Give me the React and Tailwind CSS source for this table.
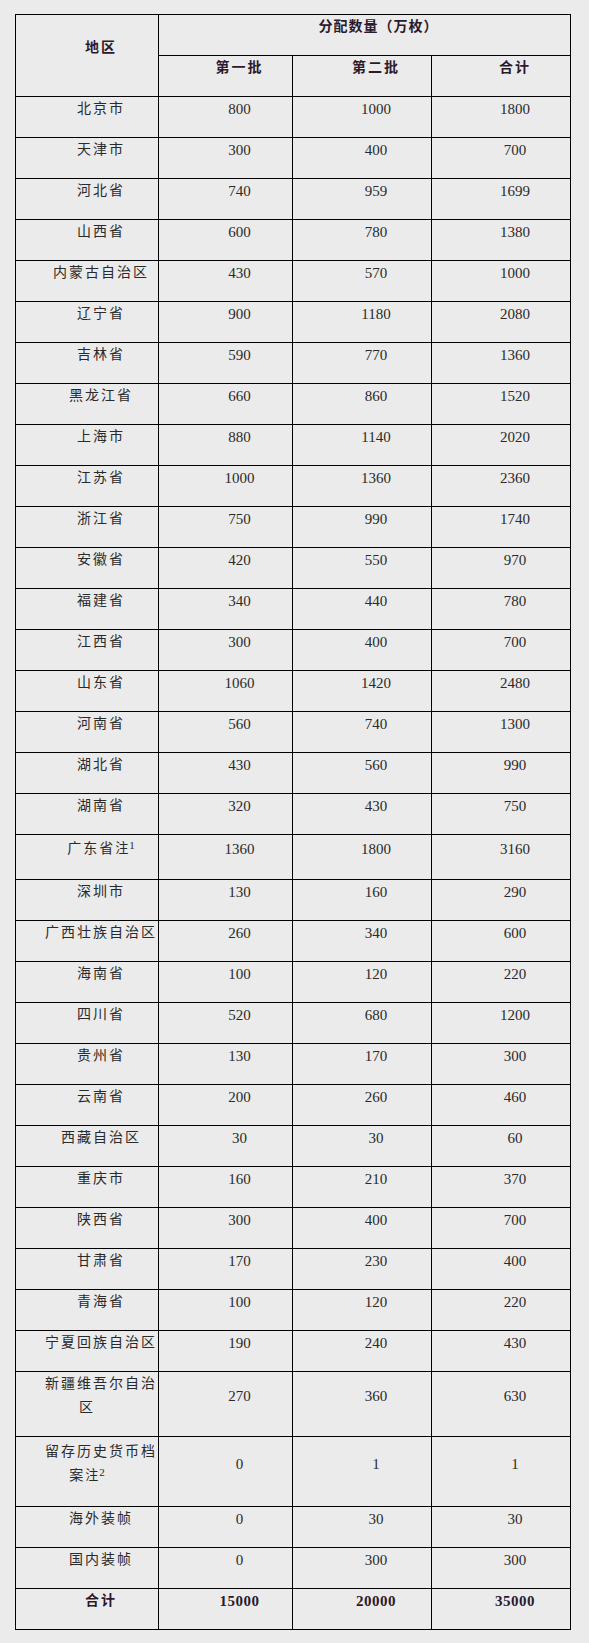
const rows = [
  ['北京市', '800', '1000', '1800'],
  ['天津市', '300', '400', '700'],
  ['河北省', '740', '959', '1699'],
  ['山西省', '600', '780', '1380'],
  ['内蒙古自治区', '430', '570', '1000'],
  ['辽宁省', '900', '1180', '2080'],
  ['吉林省', '590', '770', '1360'],
  ['黑龙江省', '660', '860', '1520'],
  ['上海市', '880', '1140', '2020'],
  ['江苏省', '1000', '1360', '2360'],
  ['浙江省', '750', '990', '1740'],
  ['安徽省', '420', '550', '970'],
  ['福建省', '340', '440', '780'],
  ['江西省', '300', '400', '700'],
  ['山东省', '1060', '1420', '2480'],
  ['河南省', '560', '740', '1300'],
  ['湖北省', '430', '560', '990'],
  ['湖南省', '320', '430', '750'],
  ['广东省', '1360', '1800', '3160', '1'],
  ['深圳市', '130', '160', '290'],
  ['广西壮族自治区', '260', '340', '600'],
  ['海南省', '100', '120', '220'],
  ['四川省', '520', '680', '1200'],
  ['贵州省', '130', '170', '300'],
  ['云南省', '200', '260', '460'],
  ['西藏自治区', '30', '30', '60'],
  ['重庆市', '160', '210', '370'],
  ['陕西省', '300', '400', '700'],
  ['甘肃省', '170', '230', '400'],
  ['青海省', '100', '120', '220'],
  ['宁夏回族自治区', '190', '240', '430'],
  ['新疆维吾尔自治区', '270', '360', '630'],
  ['留存历史货币档案', '0', '1', '1', '2'],
  ['海外装帧', '0', '30', '30'],
  ['国内装帧', '0', '300', '300'],
]

const cell =
  'border border-black px-0 pt-0 pb-[16px] text-center align-middle indent-[28px] leading-[24px]'

// "注1" / "注2" footnote marks, slightly raised
function Note({ n }) {
  return (
    <span className="tracking-normal">
      <span className="relative -top-[1px] text-[13px]">注</span>
      <span className="relative -top-[4px] ml-[1px] text-[11px]">{n}</span>
    </span>
  )
}

export default function App() {
  return (
    <div
      className="min-h-screen bg-[#ebebeb] px-[15px] pt-[14px] pb-[13px] text-[#2a2a2a]"
      style={{ fontFamily: '"Liberation Serif", "Noto Sans CJK SC", serif' }}
    >
      <table className="w-[555px] table-fixed border-collapse border border-black text-[14px]">
        <colgroup>
          <col className="w-[143px]" />
          <col className="w-[134px]" />
          <col className="w-[139px]" />
          <col className="w-[139px]" />
        </colgroup>
        <thead className="font-bold text-[#2b1a2b]">
          <tr className="h-[41px]">
            <th rowSpan={2} className={`${cell} tracking-[2px]`}>
              地区
            </th>
            <th colSpan={3} className={`${cell} tracking-[1px]`}>
              分配数量（万枚）
            </th>
          </tr>
          <tr className="h-[41px]">
            <th className={`${cell} tracking-[2px]`}>第一批</th>
            <th className={`${cell} tracking-[2px]`}>第二批</th>
            <th className={`${cell} tracking-[2px]`}>合计</th>
          </tr>
        </thead>
        <tbody>
          {rows.map(([name, a, b, c, note]) => {
            const tall = note === '1' ? 'h-[45px]' : note === '2' ? 'h-[70px]' : ''
            return (
              <tr key={name} className={tall}>
                <td className={`${cell} tracking-[2px]`}>
                  {name}
                  {note && <Note n={note} />}
                </td>
                <td className={`${cell} text-[15px]`}>{a}</td>
                <td className={`${cell} text-[15px]`}>{b}</td>
                <td className={`${cell} text-[15px]`}>{c}</td>
              </tr>
            )
          })}
          <tr className="font-bold text-[#2b1a2b]">
            <td className={`${cell} tracking-[2px]`}>合计</td>
            <td className={`${cell} text-[15px] tracking-[0.5px]`}>15000</td>
            <td className={`${cell} text-[15px] tracking-[0.5px]`}>20000</td>
            <td className={`${cell} text-[15px] tracking-[0.5px]`}>35000</td>
          </tr>
        </tbody>
      </table>
    </div>
  )
}
